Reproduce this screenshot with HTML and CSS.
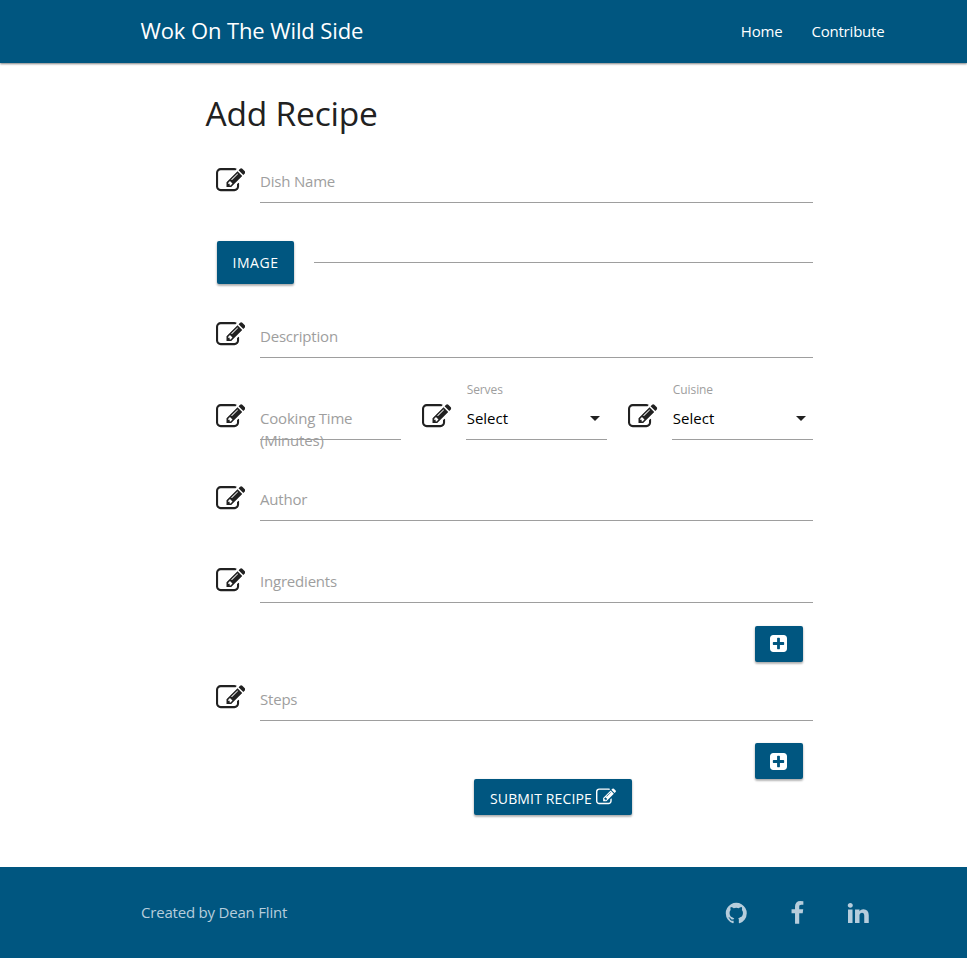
FILE: index.html
```html
<!DOCTYPE html>
<html lang="en">
<head>
<meta charset="utf-8">
<title>Wok On The Wild Side</title>
<link rel="stylesheet" href="styles.css">
</head>
<body>
<svg class="sprite" aria-hidden="true">
  <symbol id="edit" viewBox="0 0 1792 1792"><path d="M888 1184l116-116-152-152-116 116v56h96v96h56zm440-720q-16-16-33 1l-350 350q-17 17-1 33t33-1l350-350q17-17 1-33zm80 594v190q0 119-84.5 203.5t-203.5 84.5h-832q-119 0-203.5-84.5t-84.5-203.5v-832q0-119 84.5-203.5t203.5-84.5h832q63 0 117 25 15 7 18 23 3 17-9 29l-49 49q-14 14-32 8-23-6-45-6h-832q-66 0-113 47t-47 113v832q0 66 47 113t113 47h832q66 0 113-47t47-113v-126q0-13 9-22l64-64q15-15 35-7t20 29zm-96-738l288 288-672 672h-288v-288zm444 132l-92 92-288-288 92-92q28-28 68-28t68 28l152 152q28 28 28 68t-28 68z"/></symbol>
  <symbol id="plus" viewBox="128 128 1536 1536"><path d="M1408 960v-128q0-26-19-45t-45-19h-320v-320q0-26-19-45t-45-19h-128q-26 0-45 19t-19 45v320h-320q-26 0-45 19t-19 45v128q0 26 19 45t45 19h320v320q0 26 19 45t45 19h128q26 0 45-19t19-45v-320h320q26 0 45-19t19-45zm256-544v960q0 119-84.5 203.5t-203.5 84.5h-960q-119 0-203.5-84.5t-84.5-203.5v-960q0-119 84.5-203.5t203.5-84.5h960q119 0 203.5 84.5t84.5 203.5z"/></symbol>
</svg>
<header class="navbar">
  <a class="brand">Wok On The Wild Side</a>
  <nav class="links"><a>Home</a><a>Contribute</a></nav>
</header>
<main class="content">
  <h1 class="title">Add Recipe</h1>
  <form class="form">
    <div class="field"><svg class="prefix"><use href="#edit"/></svg><div class="control"><label>Dish Name</label></div></div>
    <div class="file"><span class="btn btn-file">Image</span><div class="file-path"></div></div>
    <div class="field raised"><svg class="prefix"><use href="#edit"/></svg><div class="control"><label>Description</label></div></div>
    <div class="triple raised">
      <div class="field"><svg class="prefix"><use href="#edit"/></svg><div class="control"><label>Cooking Time (Minutes)</label></div></div>
      <div class="field"><svg class="prefix"><use href="#edit"/></svg><div class="control select"><label class="caption">Serves</label><span>Select</span><svg class="caret" viewBox="0 0 10 5"><path d="M0 0h10L5 5z"/></svg></div></div>
      <div class="field"><svg class="prefix"><use href="#edit"/></svg><div class="control select"><label class="caption">Cuisine</label><span>Select</span><svg class="caret" viewBox="0 0 10 5"><path d="M0 0h10L5 5z"/></svg></div></div>
    </div>
    <div class="field author"><svg class="prefix"><use href="#edit"/></svg><div class="control"><label>Author</label></div></div>
    <div class="field list"><svg class="prefix"><use href="#edit"/></svg><div class="control"><label>Ingredients</label></div></div>
    <span class="btn btn-add"><svg><use href="#plus"/></svg></span>
    <div class="field list raised"><svg class="prefix"><use href="#edit"/></svg><div class="control"><label>Steps</label></div></div>
    <span class="btn btn-add"><svg><use href="#plus"/></svg></span>
    <span class="btn btn-submit">Submit Recipe <svg><use href="#edit"/></svg></span>
  </form>
</main>
<footer class="footer">
  <span>Created by Dean Flint</span>
  <div class="social">
    <svg viewBox="0 0 1792 1792"><path d="M896 128q209 0 385.5 103t279.5 279.5 103 385.5q0 251-146.5 451.5t-378.5 277.5q-27 5-40-7t-13-30q0-3 .5-76.5t.5-134.5q0-97-52-142 57-6 102.5-18t94-39 81-66.5 53-105 20.5-150.5q0-119-79-206 37-91-8-204-28-9-81 11t-92 44l-38 24q-93-26-192-26t-192 26q-16-11-42.5-27t-83.5-38.5-85-13.5q-45 113-8 204-79 87-79 206 0 85 20.5 150t52.5 105 80.5 67 94 39 102.5 18q-39 36-49 103-21 10-45 15t-57 5-65.5-21.5-55.5-62.5q-19-32-48.5-52t-49.5-24l-20-3q-21 0-29 4.5t-5 11.5 9 14 13 12l7 5q22 10 43.5 38t31.5 51l10 23q13 38 44 61.5t67 30 69.5 7 55.5-3.5l23-4q0 38 .5 88.5t.5 54.5q0 18-13 30t-40 7q-232-77-378.5-277.5t-146.5-451.5q0-209 103-385.5t279.5-279.5 385.5-103z"/></svg>
    <svg viewBox="0 0 1792 1792"><path d="M1343 12v264h-157q-86 0-116 36t-30 108v189h293l-39 296h-254v759h-306v-759h-255v-296h255v-218q0-186 104-288.5t277-102.5q147 0 228 12z"/></svg>
    <svg viewBox="0 0 1792 1792"><path d="M477 625v991h-330v-991h330zm21-306q1 73-50.5 122t-135.5 49h-2q-82 0-132-49t-50-122q0-74 51.5-122.5t134.5-48.5 133 48.5 51 122.5zm1166 729v568h-329v-530q0-105-40.5-164.5t-126.5-59.5q-63 0-105.5 34.5t-63.5 85.5q-11 30-11 81v553h-329q2-399 2-647t-1-296l-1-48h329v144h-2q20-32 41-56t56.5-52 87-43.5 114.5-15.5q171 0 275 113.5t104 332.5z"/></svg>
  </div>
</footer>
</body>
</html>
```
FILE: styles.css
```css
* { box-sizing: border-box; }
body {
  margin: 0;
  height: 958px;
  display: flex;
  flex-direction: column;
  background: #fff;
  color: #212121;
  font: 15px/22px "Open Sans", sans-serif;
  letter-spacing: -.2px;
}
svg { fill: currentColor; flex: none; display: block; }
.sprite { display: none; }
.navbar {
  height: 63px;
  flex: none;
  display: flex;
  align-items: center;
  justify-content: space-between;
  padding: 0 82.5px 2px 140.5px;
  background: #005680;
  color: #fff;
  box-shadow: 0 1px 2px rgba(0, 0, 0, .5);
}
.brand { font-size: 22px; letter-spacing: -.1px; padding-bottom: 2px; }
.links { display: flex; gap: 29px; }
.content { flex: 1; padding: 28px 154px 0 205.5px; }
.title { margin: 0; font-size: 33.5px; line-height: 44px; height: 46px; font-weight: 400; letter-spacing: -.2px; }
.form { display: flex; flex-direction: column; padding-left: 10.5px; }
.field { display: flex; height: 44px; margin-top: 22px; }
.prefix { width: 29.4px; height: 29.4px; margin: 7px 14.6px 0 0; }
.raised .prefix { margin-top: 6.2px; }
.control {
  flex: 1;
  min-width: 0;
  height: 44px;
  padding-top: 11px;
  border-bottom: 1px solid #9e9e9e;
  color: #9e9e9e;
}
.control label { display: block; }
.file { display: flex; margin: 38px 0 8px 1px; gap: 20px; }
.btn {
  display: flex;
  align-items: center;
  justify-content: center;
  height: 36px;
  border-radius: 2px;
  background: #005680;
  color: #fff;
  font-size: 14px;
  letter-spacing: .5px;
  text-transform: uppercase;
  box-shadow: 0 2px 2px rgba(0, 0, 0, .2), 0 1px 3px rgba(0, 0, 0, .2);
}
.btn-file { width: 77px; height: 43px; }
.file-path { flex: 1; height: 22px; border-bottom: 1px solid #9e9e9e; }
.triple { display: grid; grid-template-columns: 185px 185px 185px; gap: 21.2px; margin-top: 16px; }
.select { position: relative; color: #000; letter-spacing: 0; }
.select span { padding-left: .5px; }
.caption { position: absolute; top: -17px; left: .5px; color: #9e9e9e; font-size: 12px; letter-spacing: -.1px; }
.caret { position: absolute; right: 7px; top: 20px; width: 10px; height: 5px; color: #212121; }
.author { margin-top: 37px; }
.list { margin-top: 38px; }
.btn-add { width: 48px; align-self: flex-end; margin: 23px 10px 0 0; }
.btn-add svg { width: 17px; height: 17px; margin: 0 1px 1px 0; }
.btn-add + .list { margin-top: 15px; }
.list + .btn-add:nth-last-child(2) { margin-top: 22px; }
.btn-add:nth-last-child(2) svg { margin-bottom: 0; }
.btn-submit { width: 158px; align-self: center; gap: 4px; margin-left: 77px; padding-top: 4px; letter-spacing: .15px; }
.btn-submit svg { width: 20px; height: 20px; margin-bottom: 5px; }
.footer {
  height: 91px;
  flex: none;
  display: flex;
  align-items: center;
  justify-content: space-between;
  padding: 0 97px 0 141px;
  background: #005680;
  color: #b6cddc;
}
.footer span { padding-bottom: 2px; }
.social { display: flex; gap: 36.5px; padding-top: 1px; }
.social svg { width: 24.5px; height: 24.5px; }
```
